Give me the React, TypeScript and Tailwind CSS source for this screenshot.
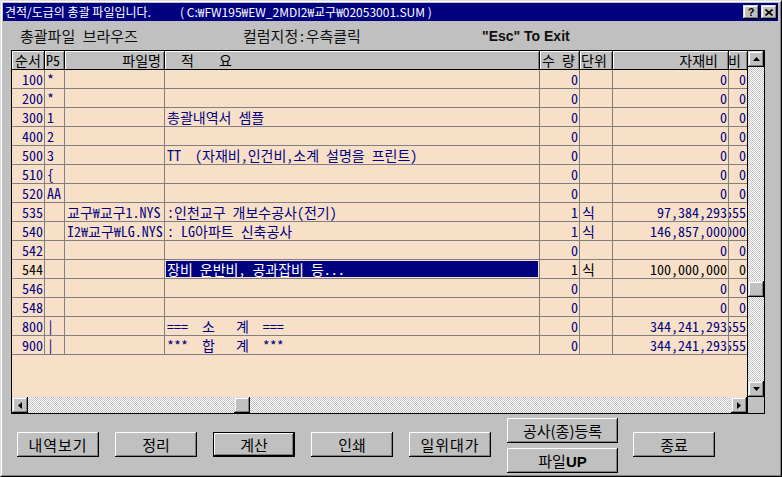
import React from "react";

type RowData = {
  no: string;
  p5?: string;
  file?: string;
  desc?: string;
  qty?: string;
  unit?: string;
  mat?: string;
  last?: string;
  sel?: boolean;
};

const rows: RowData[] = [
  { no: "100", p5: "*", qty: "0", mat: "0", last: "0" },
  { no: "200", p5: "*", qty: "0", mat: "0", last: "0" },
  { no: "300", p5: "1", desc: "총괄내역서 셈플", qty: "0", mat: "0", last: "0" },
  { no: "400", p5: "2", qty: "0", mat: "0", last: "0" },
  { no: "500", p5: "3", desc: "TT  (자재비,인건비,소계 설명을 프린트)", qty: "0", mat: "0", last: "0" },
  { no: "510", p5: "{", qty: "0", mat: "0", last: "0" },
  { no: "520", p5: "AA", qty: "0", mat: "0", last: "0" },
  { no: "535", file: "교구₩교구1.NYS", desc: ":인천교구 개보수공사(전기)", qty: "1", unit: "식", mat: "97,384,293", last: "3,555" },
  { no: "540", file: "I2₩교구₩LG.NYS", desc: ": LG아파트 신축공사", qty: "1", unit: "식", mat: "146,857,000", last: "7,000" },
  { no: "542", qty: "0", mat: "0", last: "0" },
  { no: "544", desc: "장비 운반비, 공과잡비 등...", qty: "1", unit: "식", mat: "100,000,000", last: "0", sel: true },
  { no: "546", qty: "0", mat: "0", last: "0" },
  { no: "548", qty: "0", mat: "0", last: "0" },
  { no: "800", p5: "|", desc: "===  소   계  ===", qty: "0", mat: "344,241,293", last: "3,555" },
  { no: "900", p5: "|", desc: "***  합   계  ***", qty: "0", mat: "344,241,293", last: "3,555" },
];

const BEVEL =
  "shadow-[inset_-1px_-1px_0_#000,inset_1px_1px_0_#fff,inset_-2px_-2px_0_#808080]";
const SBTN =
  "shadow-[inset_-1px_-1px_0_#000,inset_1px_1px_0_#dfdfdf,inset_-2px_-2px_0_#808080,inset_2px_2px_0_#fff]";
const CHECK =
  "bg-[conic-gradient(#c0c0c0_25%,#ffffff_0_50%,#c0c0c0_0_75%,#ffffff_0)] bg-[length:2px_2px]";

function Cell({
  w,
  right,
  children,
  last,
}: {
  w: string;
  right?: boolean;
  children?: React.ReactNode;
  last?: boolean;
}) {
  return (
    <div
      className={`${w} shrink-0 h-full ${last ? "" : "border-r border-[#808080]"} flex items-center overflow-hidden whitespace-pre leading-none ${
        right ? "justify-end pr-px" : "justify-start pl-[2px]"
      }`}
    >
      <span className="shrink-0">{children}</span>
    </div>
  );
}

function HCell({
  w,
  children,
  className = "",
  last,
}: {
  w: string;
  children?: React.ReactNode;
  className?: string;
  last?: boolean;
}) {
  return (
    <div
      className={`${w} shrink-0 h-full ${last ? "" : "border-r border-black"} bg-[#c0c0c0] shadow-[inset_1px_1px_0_#fff,inset_-1px_0_0_#808080] flex items-center overflow-hidden whitespace-pre leading-none text-black ${className}`}
    >
      {children}
    </div>
  );
}

function Row({ r }: { r: RowData }) {
  return (
    <div
      className={`flex h-[19px] shrink-0 border-b border-[#808080] ${
        r.sel ? "text-black" : "text-[#000080]"
      }`}
    >
      <Cell w="w-[33px]" right>
        {r.no}
      </Cell>
      <Cell w="w-[20px]">{r.p5}</Cell>
      <Cell w="w-[100px]">{r.file}</Cell>
      {r.sel ? (
        <div className="w-[375px] shrink-0 h-full border-r border-[#808080] flex p-px">
          <div className="flex-1 bg-[#000080] text-white flex items-center pl-px whitespace-pre leading-none">
            {r.desc}
          </div>
        </div>
      ) : (
        <Cell w="w-[375px]">{r.desc}</Cell>
      )}
      <Cell w="w-[40px]" right>
        {r.qty}
      </Cell>
      <Cell w="w-[33px]">{r.unit}</Cell>
      <Cell w="w-[116px]" right>
        {r.mat}
      </Cell>
      <Cell w="w-[18px]" right last>
        {r.last}
      </Cell>
    </div>
  );
}

function Arrow({ dir }: { dir: "up" | "down" | "left" | "right" }) {
  if (dir === "up")
    return (
      <svg width="7" height="4" viewBox="0 0 7 4">
        <polygon points="0,4 7,4 3.5,0" fill="#000" />
      </svg>
    );
  if (dir === "down")
    return (
      <svg width="7" height="4" viewBox="0 0 7 4">
        <polygon points="0,0 7,0 3.5,4" fill="#000" />
      </svg>
    );
  if (dir === "left")
    return (
      <svg width="4" height="7" viewBox="0 0 4 7">
        <polygon points="4,0 4,7 0,3.5" fill="#000" />
      </svg>
    );
  return (
    <svg width="4" height="7" viewBox="0 0 4 7">
      <polygon points="0,0 0,7 4,3.5" fill="#000" />
    </svg>
  );
}

function Btn({
  children,
  w = "w-[82px]",
  def = false,
}: {
  children: React.ReactNode;
  w?: string;
  def?: boolean;
}) {
  if (def)
    return (
      <div className={`${w} h-[25px] shrink-0 border border-black`}>
        <div
          className={`h-full w-full bg-[#c0c0c0] ${BEVEL} flex items-center justify-center`}
        >
          {children}
        </div>
      </div>
    );
  return (
    <div
      className={`${w} h-[25px] shrink-0 bg-[#c0c0c0] ${BEVEL} flex items-center justify-center`}
    >
      {children}
    </div>
  );
}

export default function App() {
  return (
    <div className="w-[782px] h-[477px] bg-[#c0c0c0] border border-t-[#dfdfdf] border-l-[#dfdfdf] border-r-black border-b-black overflow-hidden font-['Noto_Sans_Mono_CJK_KR','Noto_Sans_CJK_KR',sans-serif]">
      <div className="h-full border border-t-white border-l-white border-r-[#808080] border-b-[#808080] pt-px pl-px pr-[2px] flex flex-col">
        {/* title bar */}
        <div className="h-[18px] shrink-0 bg-[#000080] flex items-center justify-between pl-[2px] pr-px">
          <div className="flex items-center text-white text-[12px] leading-none whitespace-pre font-['Noto_Sans_CJK_KR',sans-serif]">
            <span className="w-[175px] shrink-0">견적/도급의 총괄 파일입니다.</span>
            <span>( C:₩FW195₩EW_2MDI2₩교구₩02053001.SUM )</span>
          </div>
          <div className="flex gap-[2px]">
            <div className={`w-[16px] h-[14px] bg-[#c0c0c0] ${SBTN} flex items-center justify-center text-[11px] font-bold text-black leading-none font-['Liberation_Sans',sans-serif]`}>
              ?
            </div>
            <div className={`w-[16px] h-[14px] bg-[#c0c0c0] ${SBTN} flex items-center justify-center`}>
              <svg width="8" height="7" viewBox="0 0 8 7">
                <path d="M0.5 0.5 L7.5 6.5 M7.5 0.5 L0.5 6.5" stroke="#000" strokeWidth="1.6" />
              </svg>
            </div>
          </div>
        </div>

        {/* labels */}
        <div className="h-[29px] shrink-0 flex items-center pl-[17px] text-[15px] text-[#101010] leading-none whitespace-pre">
          <span className="w-[223px] shrink-0">총괄파일 브라우즈</span>
          <span className="w-[239px] shrink-0">컬럼지정:우측클릭</span>
          <span className="font-['Liberation_Sans',sans-serif] font-bold text-[14px] text-[#101010]">
            "Esc" To Exit
          </span>
        </div>

        {/* grid */}
        <div className="ml-[8px] w-[754px] h-[364px] shrink-0 border border-black flex text-[14px]">
          <div className="w-[735px] flex flex-col">
            <div className="flex h-[19px] shrink-0 border-b border-black">
              <HCell w="w-[33px]" className="justify-center">
                <span className="shrink-0">순서</span>
              </HCell>
              <HCell w="w-[20px]" className="justify-start pl-px">
                <span className="shrink-0">P5</span>
              </HCell>
              <HCell w="w-[100px]" className="justify-end pr-[3px]">
                <span className="shrink-0">파일명</span>
              </HCell>
              <HCell w="w-[375px]" className="justify-start pl-[16px]">
                <span className="shrink-0">적</span>
                <span className="shrink-0 ml-[25px]">요</span>
              </HCell>
              <HCell w="w-[40px]" className="justify-start pl-[2px]">
                <span className="shrink-0">수 량</span>
              </HCell>
              <HCell w="w-[33px]" className="justify-start pl-px">
                <span className="shrink-0">단위</span>
              </HCell>
              <HCell w="w-[116px]" className="justify-end pr-[10px]">
                <span className="shrink-0">자재비</span>
              </HCell>
              <HCell w="w-[18px]" className="justify-end pr-[6px]" last>
                <span className="shrink-0">노무비</span>
              </HCell>
            </div>
            <div className="flex-1 flex flex-col bg-[#f8e0c8]">
              {rows.map((r) => (
                <Row key={r.no} r={r} />
              ))}
            </div>
            <div className="h-[16px] shrink-0 flex">
              <div className={`w-[16px] h-full bg-[#c0c0c0] ${SBTN} flex items-center justify-center`}>
                <Arrow dir="left" />
              </div>
              <div className={`flex-1 h-full ${CHECK} flex`}>
                <div className="w-[206px] shrink-0" />
                <div className={`w-[16px] h-full bg-[#c0c0c0] ${SBTN}`} />
              </div>
              <div className={`w-[16px] h-full bg-[#c0c0c0] ${SBTN} flex items-center justify-center`}>
                <Arrow dir="right" />
              </div>
            </div>
          </div>
          <div className="w-[17px] flex flex-col border-l border-black">
            <div className={`h-[16px] shrink-0 bg-[#c0c0c0] ${SBTN} flex items-center justify-center`}>
              <Arrow dir="up" />
            </div>
            <div className={`flex-1 ${CHECK} flex flex-col`}>
              <div className="h-[214px] shrink-0" />
              <div className={`h-[16px] shrink-0 bg-[#c0c0c0] ${SBTN}`} />
            </div>
            <div className={`h-[16px] shrink-0 bg-[#c0c0c0] ${SBTN} flex items-center justify-center`}>
              <Arrow dir="down" />
            </div>
            <div className="h-[16px] shrink-0 bg-[#c0c0c0]" />
          </div>
        </div>

        {/* buttons */}
        <div className="flex items-start pl-[14px] text-[15px] text-black leading-none font-['Noto_Sans_CJK_KR',sans-serif]">
          <div className="mt-[18px] flex gap-[16px]">
            <Btn>
              <span className="tracking-[1px]">내역보기</span>
            </Btn>
            <Btn>정리</Btn>
            <Btn def>계산</Btn>
            <Btn>인쇄</Btn>
            <Btn>
              <span className="tracking-[1px]">일위대가</span>
            </Btn>
          </div>
          <div className="ml-[16px] mt-[4px] flex flex-col gap-[5px]">
            <Btn w="w-[111px]">공사(종)등록</Btn>
            <Btn w="w-[111px]">
              <span>
                파일<span className="font-bold font-['Liberation_Sans',sans-serif]">UP</span>
              </span>
            </Btn>
          </div>
          <div className="ml-[15px] mt-[18px]">
            <Btn>종료</Btn>
          </div>
        </div>
      </div>
    </div>
  );
}
